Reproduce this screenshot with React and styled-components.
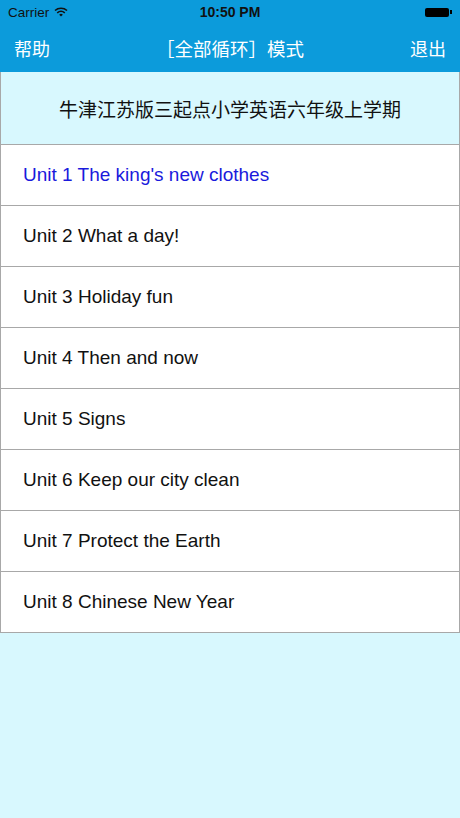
import React from 'react';
import styled, { createGlobalStyle } from 'styled-components';

const GlobalStyle = createGlobalStyle`
  html, body {
    margin: 0;
    padding: 0;
    background: #d8f8fe;
  }
  body {
    font-family: "Liberation Sans", "Noto Sans CJK SC", sans-serif;
  }
`;

const Page = styled.div`
  width: 460px;
  min-height: 818px;
  background: #d8f8fe;
`;

const TopBar = styled.div`
  background: #0c9bdb;
  color: #fff;
  height: 72px;
  display: flex;
  flex-direction: column;
`;

const StatusBar = styled.div`
  height: 24px;
  display: grid;
  grid-template-columns: 1fr auto 1fr;
  align-items: center;
  padding: 0 8px;
  font-size: 13.5px;
  color: #111;
`;

const Carrier = styled.div`
  display: flex;
  align-items: center;
  gap: 5px;
`;

const Time = styled.div`
  font-weight: bold;
  font-size: 14px;
`;

const Battery = styled.div`
  justify-self: end;
  display: flex;
  align-items: center;
  gap: 1px;
  & > span:first-child {
    width: 24px;
    height: 9px;
    background: #000;
    border-radius: 2px;
  }
  & > span:last-child {
    width: 2px;
    height: 4px;
    background: #000;
  }
`;

const NavBar = styled.div`
  flex: 1;
  display: flex;
  align-items: center;
  justify-content: space-between;
  padding: 0 14px;
  font-size: 18px;
  font-family: "Noto Sans CJK SC", sans-serif;
`;

const NavTitle = styled.div`
  font-size: 18.5px;
`;

const Header = styled.div`
  height: 72px;
  border-left: 1px solid #a8a8a8;
  border-right: 1px solid #a8a8a8;
  border-bottom: 1px solid #a8a8a8;
  display: flex;
  align-items: center;
  justify-content: center;
  font-size: 19px;
  color: #111;
  font-family: "Noto Sans CJK SC", sans-serif;
`;

const Row = styled.div`
  height: 60px;
  background: #fff;
  border-left: 1px solid #a8a8a8;
  border-right: 1px solid #a8a8a8;
  border-bottom: 1px solid #a8a8a8;
  display: flex;
  align-items: center;
  padding-left: 22px;
  font-size: 19px;
  color: ${p => (p.$active ? '#1a1adc' : '#111')};
`;

const units = [
  "Unit 1 The king's new clothes",
  'Unit 2 What a day!',
  'Unit 3 Holiday fun',
  'Unit 4 Then and now',
  'Unit 5 Signs',
  'Unit 6 Keep our city clean',
  'Unit 7 Protect the Earth',
  'Unit 8 Chinese New Year',
];

function Wifi() {
  return (
    <svg width="14" height="10" viewBox="0 0 14 10">
      <path d="M1 3.5 A9 9 0 0 1 13 3.5" stroke="#111" strokeWidth="1.6" fill="none" />
      <path d="M3.2 5.8 A6 6 0 0 1 10.8 5.8" stroke="#111" strokeWidth="1.6" fill="none" />
      <path d="M7 9.5 L5.2 7.7 A2.6 2.6 0 0 1 8.8 7.7 Z" fill="#111" />
    </svg>
  );
}

export default function App() {
  return (
    <Page>
      <GlobalStyle />
      <TopBar>
        <StatusBar>
          <Carrier>Carrier <Wifi /></Carrier>
          <Time>10:50 PM</Time>
          <Battery><span /><span /></Battery>
        </StatusBar>
        <NavBar>
          <span>帮助</span>
          <NavTitle>［全部循环］模式</NavTitle>
          <span>退出</span>
        </NavBar>
      </TopBar>
      <Header>牛津江苏版三起点小学英语六年级上学期</Header>
      {units.map((u, i) => (
        <Row key={u} $active={i === 0}>{u}</Row>
      ))}
    </Page>
  );
}
